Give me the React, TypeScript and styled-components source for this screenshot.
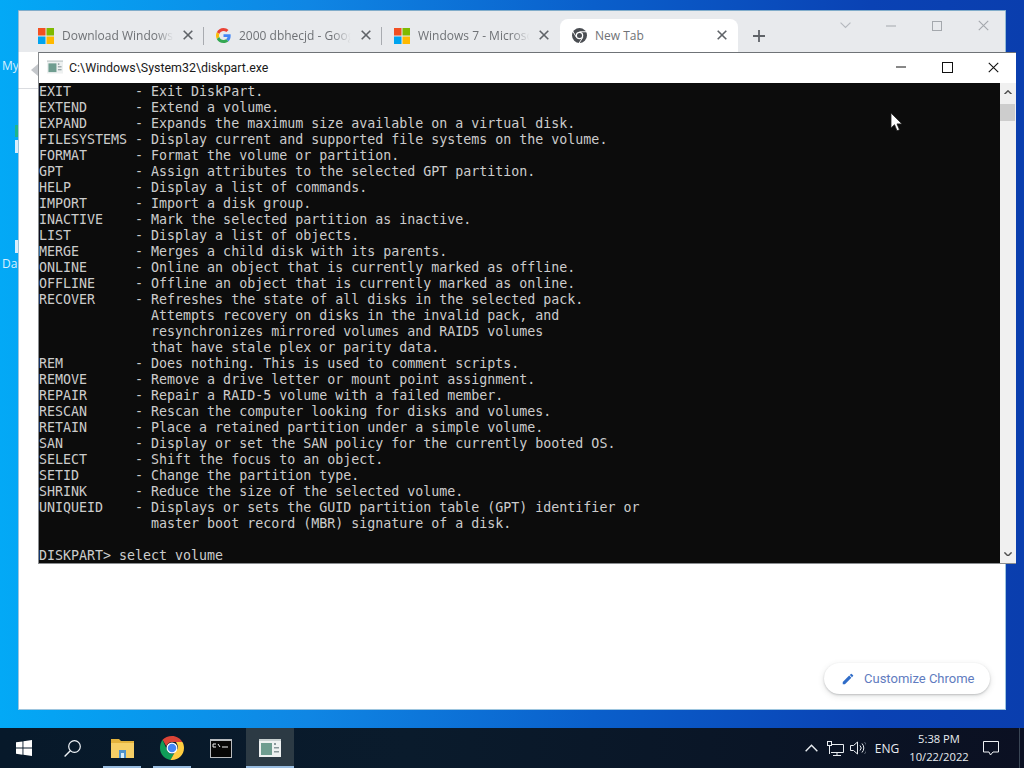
import React from "react";
import styled, { createGlobalStyle } from "styled-components";

const Global = createGlobalStyle`
  html, body { margin: 0; padding: 0; background: #0a45b8; }
  * { box-sizing: border-box; }
`;

const UI = `"Open Sans", "Noto Sans", "Liberation Sans", sans-serif`;

const Desktop = styled.div`
  position: relative;
  width: 1024px;
  height: 768px;
  overflow: hidden;
  display: grid;
  grid-template-rows: 1fr 40px;
  font-family: ${UI};
`;
const Wallpaper = styled.div`
  background: linear-gradient(90deg, #03a9f6 0%, #0f86e4 30%, #0a5fcb 58%, #0a42b4 85%, #0a3eae 100%);
`;
const DesktopLabel = styled.span<{ $top: number }>`
  position: absolute;
  left: 2px;
  top: ${(p) => p.$top}px;
  color: #d8f0ff;
  font-size: 12px;
  line-height: 16px;
`;
const DesktopSliver = styled.div<{ $top: number; $h: number; $c: string }>`
  position: absolute;
  left: 15px;
  top: ${(p) => p.$top}px;
  width: 3px;
  height: ${(p) => p.$h}px;
  background: ${(p) => p.$c};
`;

/* Browser */
const BrowserWindow = styled.div`
  position: absolute;
  left: 18px;
  top: 10px;
  width: 988px;
  height: 700px;
  display: flex;
  flex-direction: column;
  background: #fff;
  outline: 1px solid rgba(60, 140, 190, 0.5);
  outline-offset: -1px;
`;
const TabStrip = styled.div`
  height: 42px;
  flex: none;
  display: flex;
  align-items: flex-start;
  padding-left: 8px;
  background: #e8eaed;
  border-top: 1px solid #c9ced6;
`;
const Tabs = styled.div`
  display: flex;
  align-items: flex-end;
  height: 41px;
`;
const Tab = styled.div<{ $active?: boolean; $sep?: boolean }>`
  position: relative;
  width: 178px;
  height: 33px;
  display: flex;
  align-items: center;
  padding-left: 12px;
  gap: 8px;
  background: ${(p) => (p.$active ? "#fff" : "transparent")};
  border-radius: 8px 8px 0 0;
  &::after {
    content: "";
    display: ${(p) => (p.$sep ? "block" : "none")};
    position: absolute;
    right: 0;
    top: 8px;
    width: 1px;
    height: 18px;
    background: #a8abb0;
  }
`;
const TabTitle = styled.span<{ $fade?: boolean }>`
  width: 114px;
  overflow: hidden;
  white-space: nowrap;
  font-size: 12px;
  line-height: 16px;
  color: #6f7276;
  -webkit-mask-image: ${(p) => (p.$fade ? "linear-gradient(90deg, #000 82%, transparent 98%)" : "none")};
  mask-image: ${(p) => (p.$fade ? "linear-gradient(90deg, #000 82%, transparent 98%)" : "none")};
`;
const TabClose = styled.span`
  position: absolute;
  left: 157px;
  top: 11px;
  display: flex;
`;
const NewTab = styled.span`
  width: 42px;
  height: 33px;
  margin-top: 8px;
  display: flex;
  align-items: center;
  justify-content: center;
`;
const BrowserControls = styled.div`
  margin-left: auto;
  display: flex;
`;
const BrowserControl = styled.span`
  width: 46px;
  height: 29px;
  display: flex;
  align-items: center;
  justify-content: center;
`;
const Toolbar = styled.div`
  height: 37px;
  flex: none;
  display: flex;
  align-items: center;
  padding-left: 13px;
  background: #fff;
  border-bottom: 1px solid #dadce0;
`;
const Content = styled.div`
  flex: 1;
  display: flex;
  align-items: flex-end;
  justify-content: flex-end;
  padding: 0 16px 16px 0;
`;
const Customize = styled.div`
  width: 166px;
  height: 31px;
  display: flex;
  align-items: center;
  gap: 9px;
  padding-left: 17px;
  border-radius: 16px;
  background: #fff;
  box-shadow: 0 1px 2px rgba(60, 64, 67, 0.25), 0 2px 6px rgba(60, 64, 67, 0.15);
  color: #5f7cc0;
  font-family: Roboto, "Liberation Sans", sans-serif;
  font-size: 13px;
`;

/* Console */
const ConsoleWindow = styled.div`
  position: absolute;
  left: 38px;
  top: 52px;
  width: 978px;
  height: 512px;
  display: flex;
  flex-direction: column;
  background: #fff;
  border-top: 1px solid #6f7377;
  border-left: 1px solid #8a8d90;
`;
const TitleBar = styled.div`
  height: 30px;
  flex: none;
  display: flex;
  align-items: center;
  padding: 0 0 2px 8px;
  gap: 6px;
  font-family: Roboto, "Liberation Sans", sans-serif;
  font-size: 12.4px;
  color: #1a1a1a;
`;
const TitleText = styled.span`
  flex: 1;
  white-space: nowrap;
`;
const ConsoleControls = styled.div`
  display: flex;
  height: 100%;
`;
const ConsoleControl = styled.span`
  width: 46px;
  display: flex;
  align-items: center;
  justify-content: center;
`;
const ConsoleBody = styled.div`
  flex: 1;
  display: flex;
  min-height: 0;
  border-bottom: 1px solid #8a8d90;
`;
const Terminal = styled.div`
  width: 961px;
  padding-top: 1px;
  background: #0c0c0c;
  color: #cccccc;
  font-family: "DejaVu Sans Mono", "Liberation Mono", monospace;
  font-size: 13.3px;
  line-height: 16px;
  overflow: hidden;
`;
const Line = styled.div`
  height: 16px;
  white-space: pre;
`;
const Scrollbar = styled.div`
  width: 16px;
  background: #f0f0f0;
  display: flex;
  flex-direction: column;
  align-items: center;
  justify-content: space-between;
  position: relative;
`;
const ScrollButton = styled.span`
  height: 18px;
  width: 100%;
  display: flex;
  align-items: center;
  justify-content: center;
`;
const ScrollThumb = styled.div`
  position: absolute;
  top: 21px;
  left: 0;
  width: 15px;
  height: 17px;
  background: #cdcdcd;
`;

/* Taskbar */
const Taskbar = styled.div`
  display: flex;
  align-items: stretch;
  background: linear-gradient(90deg, #07192a 0%, #0a1b2c 40%, #0a1526 75%, #0b1022 100%);
  color: #e8ecf0;
`;
const TaskItem = styled.div<{ $w?: number; $mark?: boolean; $active?: boolean }>`
  position: relative;
  width: ${(p) => p.$w ?? 48}px;
  display: flex;
  align-items: center;
  justify-content: center;
  background: ${(p) => (p.$active ? "#2c3a44" : "transparent")};
  &::after {
    content: "";
    display: ${(p) => (p.$mark ? "block" : "none")};
    position: absolute;
    bottom: 0;
    left: ${(p) => (p.$active ? 0 : 5)}px;
    right: ${(p) => (p.$active ? 0 : 5)}px;
    height: 2px;
    background: #98bce0;
  }
`;
const TaskGap = styled.div<{ $w: number }>`
  width: ${(p) => p.$w}px;
`;
const Tray = styled.div`
  margin-left: auto;
  display: flex;
  align-items: center;
  position: relative;
`;
const TraySlot = styled.div<{ $w: number }>`
  width: ${(p) => p.$w}px;
  display: flex;
  justify-content: center;
  align-items: center;
  font-size: 12px;
`;
const Clock = styled.div`
  width: 68px;
  display: flex;
  flex-direction: column;
  align-items: center;
  font-size: 11.2px;
  line-height: 18px;
  white-space: nowrap;
`;
const TrayEnd = styled.div`
  width: 5px;
  align-self: stretch;
  border-left: 1px solid #3a4655;
  margin-left: 10px;
`;
const Pointer = styled.svg`
  position: absolute;
  left: 890px;
  top: 112px;
`;

/* Icons */
const WinFlag = () => (
  <svg width="16" height="16" viewBox="0 0 16 16">
    <rect width="7.5" height="7.5" fill="#f25022" />
    <rect x="8.5" width="7.5" height="7.5" fill="#7fba00" />
    <rect y="8.5" width="7.5" height="7.5" fill="#00a4ef" />
    <rect x="8.5" y="8.5" width="7.5" height="7.5" fill="#ffb900" />
  </svg>
);
const GoogleG = () => (
  <svg width="15" height="15" viewBox="0 0 48 48">
    <path fill="#EA4335" d="M24 9.5c3.5 0 6.700 1.200 9.200 3.600l6.900-6.900C35.900 2.400 30.500 0 24 0 14.600 0 6.500 5.400 2.600 13.200l8 6.200C12.400 13.700 17.700 9.500 24 9.500z" />
    <path fill="#4285F4" d="M46.900 24.500c0-1.600-.1-3.100-.4-4.500H24v9h12.900c-.6 3-2.300 5.500-4.800 7.200l7.700 6c4.500-4.200 7.100-10.300 7.100-17.700z" />
    <path fill="#FBBC05" d="M10.500 28.600c-.5-1.400-.8-3-.8-4.600s.3-3.200.8-4.600l-8-6.200C.9 16.500 0 20.100 0 24s.9 7.500 2.600 10.800l7.900-6.200z" />
    <path fill="#34A853" d="M24 48c6.500 0 11.900-2.100 15.900-5.800l-7.700-6c-2.200 1.400-4.900 2.300-8.200 2.300-6.300 0-11.600-4.200-13.500-9.900l-8 6.200C6.500 42.600 14.600 48 24 48z" />
  </svg>
);
const ChromeGrey = () => (
  <svg width="15" height="15" viewBox="0 0 24 24">
    <circle cx="12" cy="12" r="12" fill="#4a4d52" />
    <circle cx="12" cy="12" r="6" fill="#fff" />
    <circle cx="12" cy="12" r="4" fill="#4a4d52" />
    <path d="M12 6h11M7 15 1.500 5.500M17.200 15 11.500 24" stroke="#fff" strokeWidth="1.500" />
  </svg>
);
const ChromeColor = () => (
  <svg width="24" height="24" viewBox="0 0 48 48">
    <path fill="#DB4437" d="M24 0c8.900 0 16.600 4.800 20.800 12H24c-5.400 0-9.900 3.500-11.400 8.400L5.100 7.400C9.500 2.900 16.400 0 24 0z" />
    <path fill="#0F9D58" d="M24 48C10.700 48 0 37.300 0 24 0 17.400 2 12 5.100 7.400L15.500 31c2 2.800 5 5 8.500 5 1.600 0 3.100-.3 4.400-.9L20.900 47.800C22 47.900 23 48 24 48z" />
    <path fill="#FFCD40" d="M44.800 12c2 3.500 3.200 7.600 3.200 12 0 13.300-10.700 24-24 24-1.100 0-2.100-.1-3.100-.2L31 30c1.500-1.800 5-3.500 5-6 0-4.700-2-8-4-12h12.800z" />
    <circle cx="24" cy="24" r="11" fill="#fff" />
    <circle cx="24" cy="24" r="8.500" fill="#4285F4" />
  </svg>
);
const XMark = ({ c = "#5f6368", s = 10, w = 1.6 }: { c?: string; s?: number; w?: number }) => (
  <svg width={s} height={s} viewBox="0 0 10 10">
    <path d="M.7.7l8.600 8.600M9.300.7.700 9.300" stroke={c} strokeWidth={w} fill="none" />
  </svg>
);
const Plus = () => (
  <svg width="12" height="12" viewBox="0 0 12 12">
    <path d="M6 0v12M0 6h12" stroke="#5f6368" strokeWidth="1.800" />
  </svg>
);
const Chevron = ({ up, c, w = 10, sw = 1 }: { up?: boolean; c: string; w?: number; sw?: number }) => (
  <svg width={w} height={w * 0.6} viewBox="0 0 10 6">
    <path d={up ? "M.5 5.500 5 1l4.500 4.500" : "M.5.500 5 5 9.500.500"} stroke={c} strokeWidth={sw} fill="none" />
  </svg>
);
const ConsoleGlyph = ({ s = 16 }: { s?: number }) => (
  <svg width={s} height={s} viewBox="0 0 22 18">
    <rect width="22" height="18" fill="#eef1f1" />
    <rect y="0" width="22" height="2" fill="#c8d0d0" />
    <rect x="2" y="4" width="11" height="12" fill="#6f9d90" />
    <rect x="15" y="4" width="2" height="2" fill="#88979a" />
    <rect x="15" y="8" width="5" height="1.500" fill="#88979a" />
    <rect x="15" y="12" width="5" height="1.500" fill="#88979a" />
  </svg>
);
const FolderGlyph = () => (
  <svg width="23" height="20" viewBox="0 0 23 20">
    <path d="M0 1h8l2 2h13v3H0z" fill="#e3b23c" />
    <rect y="5" width="23" height="15" fill="#f6cf66" />
    <rect x="8" y="12" width="7" height="8" fill="#4f93cc" />
    <rect x="10" y="15" width="3" height="5" fill="#d7ecf8" />
  </svg>
);
const CmdGlyph = () => (
  <svg width="22" height="19" viewBox="0 0 22 19">
    <rect width="22" height="19" fill="#b9bcbf" />
    <rect x="1" y="2" width="20" height="16" fill="#060606" />
    <path d="M3 5h3M3 5v3h3M8 5l2 3M12 8h6" stroke="#f0f0f0" strokeWidth="1" fill="none" />
  </svg>
);

type Row = [string, string];
const rows: Row[] = [
  ["EXIT", "Exit DiskPart."],
  ["EXTEND", "Extend a volume."],
  ["EXPAND", "Expands the maximum size available on a virtual disk."],
  ["FILESYSTEMS", "Display current and supported file systems on the volume."],
  ["FORMAT", "Format the volume or partition."],
  ["GPT", "Assign attributes to the selected GPT partition."],
  ["HELP", "Display a list of commands."],
  ["IMPORT", "Import a disk group."],
  ["INACTIVE", "Mark the selected partition as inactive."],
  ["LIST", "Display a list of objects."],
  ["MERGE", "Merges a child disk with its parents."],
  ["ONLINE", "Online an object that is currently marked as offline."],
  ["OFFLINE", "Offline an object that is currently marked as online."],
  ["RECOVER", "Refreshes the state of all disks in the selected pack."],
  ["", "Attempts recovery on disks in the invalid pack, and"],
  ["", "resynchronizes mirrored volumes and RAID5 volumes"],
  ["", "that have stale plex or parity data."],
  ["REM", "Does nothing. This is used to comment scripts."],
  ["REMOVE", "Remove a drive letter or mount point assignment."],
  ["REPAIR", "Repair a RAID-5 volume with a failed member."],
  ["RESCAN", "Rescan the computer looking for disks and volumes."],
  ["RETAIN", "Place a retained partition under a simple volume."],
  ["SAN", "Display or set the SAN policy for the currently booted OS."],
  ["SELECT", "Shift the focus to an object."],
  ["SETID", "Change the partition type."],
  ["SHRINK", "Reduce the size of the selected volume."],
  ["UNIQUEID", "Displays or sets the GUID partition table (GPT) identifier or"],
  ["", "master boot record (MBR) signature of a disk."],
];
const formatRow = ([cmd, desc]: Row) =>
  cmd ? `${cmd.padEnd(12, " ")}- ${desc}` : `${" ".repeat(14)}${desc}`;

const tabs = [
  { icon: <WinFlag />, title: "Download Windows 7", fade: true, sep: true },
  { icon: <GoogleG />, title: "2000 dbhecjd - Google Search", fade: true, sep: true },
  { icon: <WinFlag />, title: "Windows 7 - Microsoft", fade: true },
  { icon: <ChromeGrey />, title: "New Tab", active: true },
];

export default function App() {
  return (
    <Desktop>
      <Global />
      <Wallpaper />
      <DesktopLabel $top={58}>My</DesktopLabel>
      <DesktopLabel $top={256}>Da</DesktopLabel>
      <DesktopSliver $top={125} $h={12} $c="#1fb58a" />
      <DesktopSliver $top={140} $h={13} $c="#d9eefc" />
      <DesktopSliver $top={240} $h={13} $c="#d9eefc" />

      <BrowserWindow>
        <TabStrip>
          <Tabs>
            {tabs.map((t) => (
              <Tab key={t.title} $active={t.active} $sep={t.sep}>
                {t.icon}
                <TabTitle $fade={t.fade}>{t.title}</TabTitle>
                <TabClose>
                  <XMark />
                </TabClose>
              </Tab>
            ))}
          </Tabs>
          <NewTab>
            <Plus />
          </NewTab>
          <BrowserControls>
            <BrowserControl>
              <Chevron c="#b4b8bd" w={11} />
            </BrowserControl>
            <BrowserControl>
              <svg width="10" height="2" viewBox="0 0 10 2">
                <path d="M0 1h10" stroke="#a4a8ad" />
              </svg>
            </BrowserControl>
            <BrowserControl>
              <svg width="10" height="10" viewBox="0 0 10 10">
                <rect x=".5" y=".5" width="9" height="9" fill="none" stroke="#a4a8ad" />
              </svg>
            </BrowserControl>
            <BrowserControl>
              <XMark c="#a4a8ad" s={11} w={1} />
            </BrowserControl>
          </BrowserControls>
        </TabStrip>
        <Toolbar>
          <svg width="8" height="12" viewBox="0 0 8 12">
            <path d="M7 0 0 6l7 6z" fill="#c4c7cb" />
          </svg>
        </Toolbar>
        <Content>
          <Customize>
            <svg width="14" height="14" viewBox="0 0 24 24">
              <path fill="#2f6cc8" d="M3 17.250V21h3.750L17.810 9.940l-3.750-3.750L3 17.250zM20.710 7.040a1 1 0 0 0 0-1.410l-2.340-2.340a1 1 0 0 0-1.410 0l-1.830 1.830 3.750 3.750 1.830-1.830z" />
            </svg>
            <span>Customize Chrome</span>
          </Customize>
        </Content>
      </BrowserWindow>

      <ConsoleWindow>
        <TitleBar>
          <ConsoleGlyph />
          <TitleText>C:\Windows\System32\diskpart.exe</TitleText>
          <ConsoleControls>
            <ConsoleControl>
              <svg width="10" height="2" viewBox="0 0 10 2">
                <path d="M0 1h10" stroke="#111" />
              </svg>
            </ConsoleControl>
            <ConsoleControl>
              <svg width="11" height="11" viewBox="0 0 11 11">
                <rect x=".5" y=".5" width="10" height="10" fill="none" stroke="#111" />
              </svg>
            </ConsoleControl>
            <ConsoleControl>
              <XMark c="#111" s={11} w={1} />
            </ConsoleControl>
          </ConsoleControls>
        </TitleBar>
        <ConsoleBody>
          <Terminal>
            {rows.map((r, i) => (
              <Line key={i}>{formatRow(r)}</Line>
            ))}
            <Line />
            <Line>DISKPART&gt; select volume</Line>
          </Terminal>
          <Scrollbar>
            <ScrollButton>
              <Chevron up c="#505050" w={8} sw={1.800} />
            </ScrollButton>
            <ScrollThumb />
            <ScrollButton>
              <Chevron c="#505050" w={8} sw={1.800} />
            </ScrollButton>
          </Scrollbar>
        </ConsoleBody>
      </ConsoleWindow>

      <Taskbar>
        <TaskItem>
          <svg width="16" height="16" viewBox="0 0 16 16">
            <path fill="#fff" d="M0 2.300 6.500 1.400V7.600H0zM7.400 1.300 16 0V7.600H7.400zM0 8.500H6.500V14.700L0 13.800zM7.400 8.500H16V16L7.400 14.800z" />
          </svg>
        </TaskItem>
        <TaskItem>
          <svg width="17" height="17" viewBox="0 0 17 17">
            <circle cx="10.500" cy="6.500" r="5.800" fill="none" stroke="#f0f4f8" strokeWidth="1.200" />
            <path d="M6.300 10.700.6 16.400" stroke="#f0f4f8" strokeWidth="1.400" />
          </svg>
        </TaskItem>
        <TaskGap $w={2} />
        <TaskItem $mark>
          <FolderGlyph />
        </TaskItem>
        <TaskGap $w={2} />
        <TaskItem $mark>
          <ChromeColor />
        </TaskItem>
        <TaskGap $w={1} />
        <TaskItem>
          <CmdGlyph />
        </TaskItem>
        <TaskGap $w={1} />
        <TaskItem $mark $active>
          <ConsoleGlyph s={22} />
        </TaskItem>
        <Tray>
          <TraySlot $w={24}>
            <Chevron up c="#e8ecf0" w={13} sw={1.100} />
          </TraySlot>
          <TraySlot $w={24}>
            <svg width="17" height="15" viewBox="0 0 17 15">
              <path d="M4 3.500h12.500v8H4M10 11.500v3M6 14.500h8" fill="none" stroke="#e8ecf0" />
              <rect x=".5" y=".5" width="4" height="4" fill="#0a1526" stroke="#e8ecf0" />
              <path d="M2.500 4.500v8.500" stroke="#e8ecf0" />
            </svg>
          </TraySlot>
          <TraySlot $w={22}>
            <svg width="16" height="14" viewBox="0 0 16 14">
              <path d="M.5 4.500h3L7.500 1v12l-4-3.500h-3z" fill="none" stroke="#e8ecf0" />
              <path d="M10 4.500a3.500 3.500 0 0 1 0 5M12 2.500a6.500 6.500 0 0 1 0 9" fill="none" stroke="#e8ecf0" />
              <path d="M14.500 1a9 9 0 0 1 0 12" fill="none" stroke="#5b6573" />
            </svg>
          </TraySlot>
          <TraySlot $w={36}>ENG</TraySlot>
          <Clock>
            <span>5:38 PM</span>
            <span>10/22/2022</span>
          </Clock>
          <TraySlot $w={36}>
            <svg width="16" height="15" viewBox="0 0 16 15">
              <path d="M.5.500h15v10.500h-5.500L7.500 14 6 11H.5z" fill="none" stroke="#eef1f4" />
            </svg>
          </TraySlot>
          <TrayEnd />
        </Tray>
      </Taskbar>

      <Pointer width="13" height="20" viewBox="0 0 13 20">
        <path d="M1 1v15l3.500-3.300 2.500 6 2.500-1-2.500-5.800h5z" fill="#fff" stroke="#222" strokeWidth=".8" />
      </Pointer>
    </Desktop>
  );
}
